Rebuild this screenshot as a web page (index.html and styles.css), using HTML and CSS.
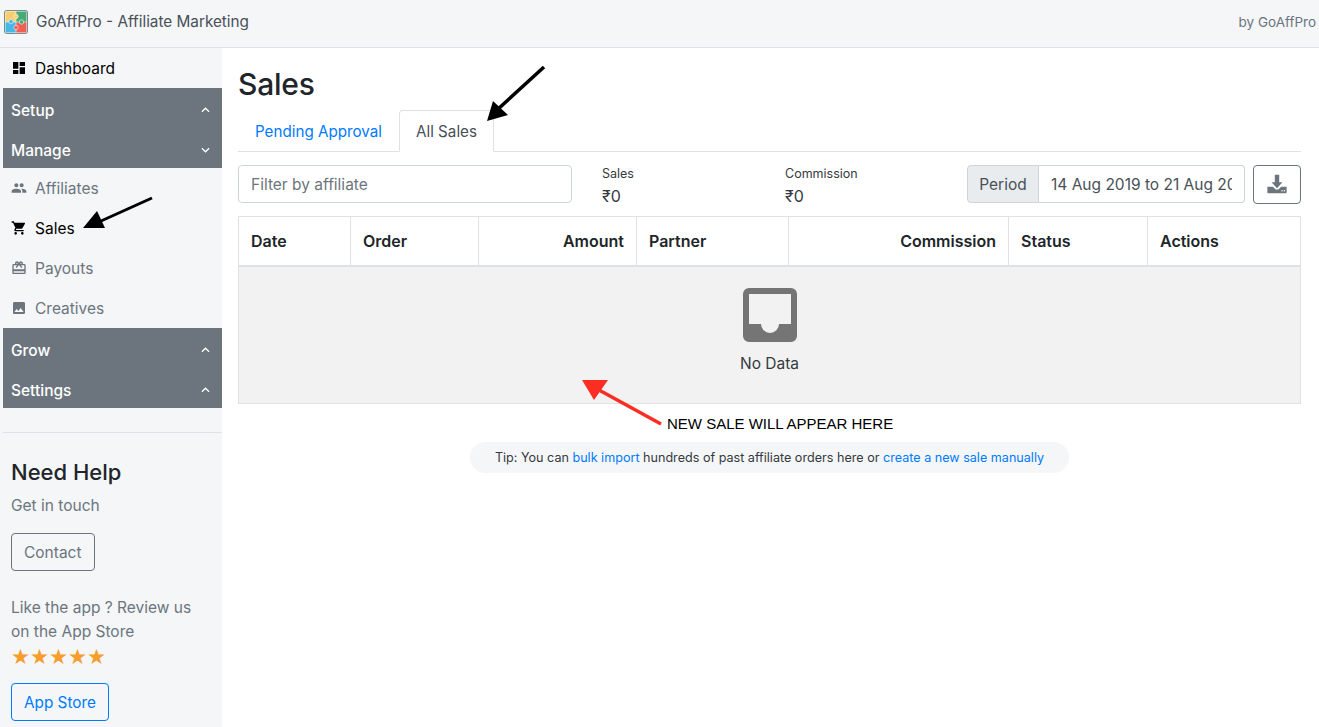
FILE: index.html
```html
<!DOCTYPE html>
<html lang="en">
<head>
  <meta charset="UTF-8" />
  <title>GoAffPro - Affiliate Marketing</title>
  <link rel="stylesheet" href="styles.css">
</head>
<body>

  <header class="topbar">
    <div class="brand">
      <svg class="logo" viewBox="0 0 24 24" width="24" height="24">
        <rect x="0" y="0" width="24" height="24" rx="3" fill="#7d8b8b"/>
        <rect x="1" y="1" width="22" height="22" rx="1.5" fill="#f4f6f8"/>
        <rect x="1.5" y="1.5" width="10.2" height="10.2" fill="#f6cf6c"/>
        <rect x="12.3" y="1.5" width="10.2" height="10.2" fill="#47ab78"/>
        <rect x="1.5" y="12.3" width="10.2" height="10.2" fill="#45b8e8"/>
        <rect x="12.3" y="12.3" width="10.2" height="10.2" fill="#ee5f55"/>
        <circle cx="12" cy="6.5" r="2.2" fill="#f6cf6c" stroke="#f4f6f8" stroke-width=".6"/>
        <circle cx="7" cy="11.6" r="2.2" fill="#45b8e8" stroke="#f4f6f8" stroke-width=".6"/>
        <circle cx="17.5" cy="12" r="2.2" fill="#47ab78" stroke="#f4f6f8" stroke-width=".6"/>
        <circle cx="12" cy="17.5" r="2.2" fill="#ee5f55" stroke="#f4f6f8" stroke-width=".6"/>
      </svg>
      <span>GoAffPro - Affiliate Marketing</span>
    </div>
    <span class="by">by GoAffPro</span>
  </header>

  <div class="layout">
    <aside class="sidebar">
      <a class="nav-item active">
        <svg viewBox="0 0 24 24" width="16" height="16"><path d="M3 13h8V3H3v10zm0 8h8v-6H3v6zm10 0h8V11h-8v10zm0-18v6h8V3h-8z"/></svg>
        Dashboard
      </a>
      <div class="nav-group">Setup <svg viewBox="0 0 10 6" width="9" height="6"><path d="M1 5l4-4 4 4"/></svg></div>
      <div class="nav-group">Manage <svg viewBox="0 0 10 6" width="9" height="6"><path d="M1 1l4 4 4-4"/></svg></div>
      <a class="nav-item">
        <svg viewBox="0 0 24 24" width="16" height="16"><path d="M16 11c1.66 0 2.99-1.34 2.99-3S17.66 5 16 5s-3 1.34-3 3 1.34 3 3 3zm-8 0c1.66 0 2.99-1.34 2.99-3S9.66 5 8 5 5 6.34 5 8s1.34 3 3 3zm0 2c-2.33 0-7 1.17-7 3.5V19h14v-2.5C15 14.17 10.33 13 8 13zm8 0c-.29 0-.62.02-.97.05 1.16.84 1.97 1.97 1.97 3.45V19h6v-2.5c0-2.33-4.67-3.5-7-3.5z"/></svg>
        Affiliates
      </a>
      <a class="nav-item active">
        <svg viewBox="0 0 24 24" width="16" height="16"><path d="M7 18c-1.1 0-1.99.9-1.99 2S5.9 22 7 22s2-.9 2-2-.9-2-2-2zM1 2v2h2l3.6 7.59-1.35 2.45c-.16.28-.25.61-.25.96 0 1.1.9 2 2 2h12v-2H7.42c-.14 0-.25-.11-.25-.25l.03-.12.9-1.63h7.45c.75 0 1.41-.41 1.75-1.03l3.58-6.49A1 1 0 0 0 20 4H5.21l-.94-2H1zm16 16c-1.1 0-1.99.9-1.99 2s.89 2 1.99 2 2-.9 2-2-.9-2-2-2z"/></svg>
        Sales
      </a>
      <a class="nav-item">
        <svg viewBox="0 0 24 24" width="16" height="16"><path d="M20 6h-2.18c.11-.31.18-.65.18-1a2.996 2.996 0 0 0-5.5-1.65l-.5.67-.5-.68C10.96 2.54 10.05 2 9 2 7.34 2 6 3.34 6 5c0 .35.07.69.18 1H4c-1.11 0-1.99.89-1.99 2L2 19c0 1.11.89 2 2 2h16c1.11 0 2-.89 2-2V8c0-1.11-.89-2-2-2zm-5-2c.55 0 1 .45 1 1s-.45 1-1 1-1-.45-1-1 .45-1 1-1zM9 4c.55 0 1 .45 1 1s-.45 1-1 1-1-.45-1-1 .45-1 1-1zm11 15H4v-2h16v2zm0-5H4V8h5.08L7 10.83 8.62 12 12 7.4l3.38 4.6L17 10.83 14.92 8H20v6z"/></svg>
        Payouts
      </a>
      <a class="nav-item">
        <svg viewBox="0 0 24 24" width="16" height="16"><path d="M21 19V5c0-1.1-.9-2-2-2H5c-1.1 0-2 .9-2 2v14c0 1.1.9 2 2 2h14c1.1 0 2-.9 2-2zM8.5 13.5l2.5 3.01L14.5 12l4.5 6H5l3.5-4.5z"/></svg>
        Creatives
      </a>
      <div class="nav-group">Grow <svg viewBox="0 0 10 6" width="9" height="6"><path d="M1 5l4-4 4 4"/></svg></div>
      <div class="nav-group">Settings <svg viewBox="0 0 10 6" width="9" height="6"><path d="M1 5l4-4 4 4"/></svg></div>

      <div class="help">
        <h2>Need Help</h2>
        <p class="touch">Get in touch</p>
        <button class="btn btn-grey">Contact</button>
        <p class="review">Like the app ? Review us on the App Store</p>
        <div class="stars">★★★★★</div>
        <button class="btn btn-blue">App Store</button>
      </div>
    </aside>

    <main class="content">
      <h1>Sales</h1>
      <div class="tabs">
        <a class="tab">Pending Approval</a>
        <a class="tab tab-active">All Sales</a>
      </div>

      <div class="filters">
        <input class="filter-input" type="text" placeholder="Filter by affiliate" />
        <div class="stat stat-sales"><small>Sales</small><span>₹0</span></div>
        <div class="stat stat-comm"><small>Commission</small><span>₹0</span></div>
        <div class="period">
          <span class="period-label">Period</span>
          <span class="period-value"><span>14 Aug 2019 to 21 Aug 2019</span></span>
        </div>
        <button class="btn-download">
          <svg viewBox="0 0 24 24" width="22" height="22"><path d="M12 16.5l-6-6.5h3.6V2h4.8v8H18z"/><path d="M1.5 15h6l3 3h3l3-3h6v6a1 1 0 0 1-1 1h-19a1 1 0 0 1-1-1z"/><circle cx="17.5" cy="19.3" r=".8" fill="#fff"/><circle cx="20" cy="19.3" r=".8" fill="#fff"/></svg>
        </button>
      </div>

      <table class="orders">
        <thead>
          <tr>
            <th class="c-date">Date</th>
            <th class="c-order">Order</th>
            <th class="c-amount right">Amount</th>
            <th class="c-partner">Partner</th>
            <th class="c-comm right">Commission</th>
            <th class="c-status">Status</th>
            <th>Actions</th>
          </tr>
        </thead>
        <tbody>
          <tr>
            <td colspan="7" class="empty">
              <svg viewBox="0 0 54 54" width="54" height="54"><path fill-rule="evenodd" d="M6 0h42a6 6 0 0 1 6 6v42a6 6 0 0 1-6 6H6a6 6 0 0 1-6-6V6a6 6 0 0 1 6-6zM6 6v30h12a9 9 0 0 0 18 0h12V6z"/></svg>
              <div>No Data</div>
            </td>
          </tr>
        </tbody>
      </table>

      <div class="tip">Tip: You can <a>bulk import</a> hundreds of past affiliate orders here or <a>create a new sale manually</a></div>
    </main>
  </div>

  <!-- annotations drawn on top of the screenshot -->
  <svg class="arrow arrow-tab" viewBox="0 0 70 70" width="70" height="70"><path d="M61 5L14 48" stroke="#000" stroke-width="3.5"/><path d="M4 59l6-20 15 14z" fill="#000"/></svg>
  <svg class="arrow arrow-sales" viewBox="0 0 74 40" width="74" height="40"><path d="M71 3L20 26" stroke="#000" stroke-width="3"/><path d="M2 33l14-17 8 17z" fill="#000"/></svg>
  <svg class="arrow arrow-red" viewBox="0 0 84 48" width="84" height="48"><path d="M80 45L18 11" stroke="#fc2d22" stroke-width="3.5"/><path d="M1 1l26 0-14 20z" fill="#fc2d22"/></svg>
  <span class="note">NEW SALE WILL APPEAR HERE</span>

</body>
</html>
```

FILE: styles.css
```css
* {
  box-sizing: border-box;
}

html, body {
  height: 100%;
}

body {
  margin: 0;
  font-family: Inter, "Liberation Sans", sans-serif;
  font-size: 16px;
  color: #212529;
  background: #f4f6f8;
  overflow: hidden;
  position: relative;
}

.topbar {
  height: 48px;
  display: flex;
  align-items: center;
  justify-content: space-between;
  padding: 0 3px 4px 4px;
  background: #f4f6f8;
  border-bottom: 1px solid #dee2e6;
}

.brand {
  display: flex;
  align-items: center;
  gap: 8px;
  color: #495057;
  font-size: 15.3px;
}

.by {
  color: #6c757d;
  font-size: 13.5px;
}

.layout {
  display: flex;
  height: 679px;
}

.sidebar {
  width: 222px;
  flex: none;
  padding-left: 3px;
}

.nav-item {
  height: 40px;
  display: flex;
  align-items: center;
  gap: 8px;
  padding-left: 8px;
  color: #6c757d;
  font-size: 15.5px;
}

.nav-item svg {
  fill: currentColor;
  flex: none;
}

.nav-item.active {
  color: #000;
}

.nav-group {
  height: 40px;
  display: flex;
  align-items: center;
  justify-content: space-between;
  padding: 4px 12px 0 8px;
  background: #6c757d;
  color: #fff;
  font-size: 15.5px;
  font-weight: 500;
}

.nav-group svg {
  fill: none;
  stroke: #fff;
  stroke-width: 1.4;
}

.help {
  margin-top: 24px;
  padding: 26px 8px 0;
  border-top: 1px solid #dee2e6;
  color: #6c757d;
}

.help h2 {
  margin: 0;
  font-size: 22px;
  line-height: 26px;
  font-weight: 500;
  color: #212529;
}

.touch {
  margin: 9px 0 15px;
  font-size: 15.5px;
  line-height: 24px;
}

.btn {
  display: block;
  height: 38px;
  padding: 0 12px;
  background: transparent;
  border-radius: 4px;
  font-family: inherit;
  font-size: 15.5px;
}

.btn-grey {
  border: 1px solid #6c757d;
  color: #6c757d;
}

.btn-blue {
  border: 1px solid #007bff;
  color: #007bff;
  font-size: 15.3px;
}

.review {
  margin: 25px 0 0;
  font-size: 15.5px;
  line-height: 24px;
  width: 190px;
}

.stars {
  color: #f69d2c;
  font-size: 21.2px;
  line-height: 26px;
  font-family: "DejaVu Sans", sans-serif;
  margin-bottom: 13px;
}

.content {
  flex: 1;
  background: #fff;
  padding: 15px 18px 0 16px;
}

h1 {
  margin: 0;
  font-size: 30px;
  line-height: 42px;
  font-weight: 500;
  letter-spacing: -0.2px;
}

.tabs {
  display: flex;
  margin-top: 5px;
  height: 42px;
  border-bottom: 1px solid #dee2e6;
}

.tab {
  padding: 0 16px;
  line-height: 42px;
  font-size: 15.2px;
  color: #007bff;
  border: 1px solid transparent;
  border-radius: 4px 4px 0 0;
  height: 42px;
}

.tab-active {
  color: #495057;
  background: #fff;
  border-color: #dee2e6 #dee2e6 #fff;
}

.filters {
  display: flex;
  align-items: center;
  height: 64px;
}

.filter-input {
  width: 334px;
  height: 38px;
  padding: 0 12px;
  border: 1px solid #ced4da;
  border-radius: 4px;
  font-family: inherit;
  font-size: 15.5px;
}

.filter-input::placeholder {
  color: #6c757d;
}

.stat {
  display: flex;
  flex-direction: column;
  padding-top: 6px;
  font-size: 16px;
}

.stat small {
  font-size: 12.5px;
  line-height: 18px;
  color: #343a40;
}

.stat span {
  line-height: 26px;
  color: #343a40;
}

.stat-sales {
  margin-left: 30px;
  width: 183px;
}

.stat-comm {
  width: 182px;
}

.period {
  display: flex;
  width: 278px;
  height: 38px;
  font-size: 15.5px;
  color: #495057;
}

.period-label {
  width: 72px;
  flex: none;
  line-height: 38px;
  text-align: center;
  background: #e9ecef;
  border: 1px solid #ced4da;
  border-radius: 4px 0 0 4px;
}

.period-value {
  flex: 1;
  min-width: 0;
  padding: 0 12px;
  line-height: 38px;
  border: 1px solid #ced4da;
  border-left: 0;
  border-radius: 0 4px 4px 0;
  overflow: hidden;
}

.period-value span {
  display: block;
  overflow: hidden;
  white-space: nowrap;
}

.btn-download {
  margin-left: 8px;
  width: 48px;
  height: 39px;
  padding: 0;
  display: flex;
  align-items: center;
  justify-content: center;
  background: #fff;
  border: 1px solid #6c757d;
  border-radius: 4px;
}

.btn-download svg {
  fill: #6c757d;
}

.orders {
  width: 1063px;
  border-collapse: collapse;
  table-layout: fixed;
  font-size: 16px;
}

.orders th {
  height: 49px;
  padding: 0 12px;
  text-align: left;
  font-weight: 600;
  border: 1px solid #dee2e6;
  border-bottom-width: 2px;
}

.orders th.right {
  text-align: right;
}

.c-date { width: 112px; }
.c-order { width: 128px; }
.c-amount { width: 158px; }
.c-partner { width: 152px; }
.c-comm { width: 220px; }
.c-status { width: 139px; }

.empty {
  height: 138px;
  background: #f2f2f2;
  border: 1px solid #dee2e6;
  text-align: center;
  vertical-align: top;
  padding-top: 21px;
  color: #343a40;
  font-size: 15.5px;
}

.empty svg {
  display: block;
  margin: 0 auto 12px;
  fill: #757575;
}

.tip {
  width: 599px;
  height: 31px;
  margin: 38px 0 0 232px;
  background: #f4f6f8;
  border-radius: 16px;
  font-size: 12.6px;
  line-height: 31px;
  text-align: center;
  color: #343a40;
}

.tip a {
  color: #007bff;
}

.arrow {
  position: absolute;
}

.arrow-tab {
  left: 483px;
  top: 62px;
}

.arrow-sales {
  left: 81px;
  top: 195px;
}

.arrow-red {
  left: 581px;
  top: 379px;
}

.note {
  position: absolute;
  left: 667px;
  top: 415px;
  font-family: "Liberation Sans", sans-serif;
  font-size: 15px;
  color: #000;
}
```
